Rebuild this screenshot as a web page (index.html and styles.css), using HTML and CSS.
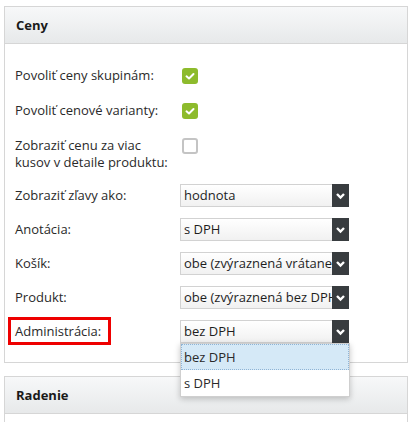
FILE: index.html
```html
<!DOCTYPE html>
<html lang="sk">
<head>
  <meta charset="UTF-8">
  <meta name="viewport" content="width=device-width, initial-scale=1.0">
  <title>Nastavenia – Ceny</title>
  <link rel="stylesheet" href="styles.css">
</head>
<body>
  <div class="page">
    <section class="panel">
      <header class="panel-head">Ceny</header>
      <div class="panel-body">
        <div class="row check-row">
          <label class="label">Povoliť ceny skupinám:</label>
          <span class="checkbox checked"><svg viewBox="0 0 16 16"><polyline points="4.5,8.3 7,10.5 11.5,6" /></svg></span>
        </div>
        <div class="row check-row">
          <label class="label">Povoliť cenové varianty:</label>
          <span class="checkbox checked"><svg viewBox="0 0 16 16"><polyline points="4.5,8.3 7,10.5 11.5,6" /></svg></span>
        </div>
        <div class="row check-row last-check">
          <label class="label">Zobraziť cenu za viac kusov v detaile produktu:</label>
          <span class="checkbox"></span>
        </div>

        <div class="row select-row">
          <label class="label">Zobraziť zľavy ako:</label>
          <div class="select"><span class="value">hodnota</span><span class="arrow"><svg viewBox="0 0 17 24"><polyline points="5,10 8.5,13.5 12,10" /></svg></span></div>
        </div>
        <div class="row select-row">
          <label class="label">Anotácia:</label>
          <div class="select"><span class="value">s DPH</span><span class="arrow"><svg viewBox="0 0 17 24"><polyline points="5,10 8.5,13.5 12,10" /></svg></span></div>
        </div>
        <div class="row select-row">
          <label class="label">Košík:</label>
          <div class="select"><span class="value">obe (zvýraznená vrátane DPH)</span><span class="arrow"><svg viewBox="0 0 17 24"><polyline points="5,10 8.5,13.5 12,10" /></svg></span></div>
        </div>
        <div class="row select-row">
          <label class="label">Produkt:</label>
          <div class="select"><span class="value">obe (zvýraznená bez DPH)</span><span class="arrow"><svg viewBox="0 0 17 24"><polyline points="5,10 8.5,13.5 12,10" /></svg></span></div>
        </div>
        <div class="row select-row last-row">
          <span class="highlight"></span>
          <label class="label">Administrácia:</label>
          <div class="select open">
            <span class="value">bez DPH</span><span class="arrow"><svg viewBox="0 0 17 24"><polyline points="5,10 8.5,13.5 12,10" /></svg></span>
            <ul class="options">
              <li class="active">bez DPH</li>
              <li>s DPH</li>
            </ul>
          </div>
        </div>
      </div>
    </section>

    <section class="panel">
      <header class="panel-head">Radenie</header>
      <div class="panel-body empty"></div>
    </section>
  </div>
</body>
</html>
```

FILE: styles.css
```css
:root {
  --border: #d6d6d6;
  --text: #2a2a2a;
  --green: #8dbb2c;
  --dark: #383c3f;
}

body {
  margin: 0;
  font-family: 'Open Sans', 'DejaVu Sans', sans-serif;
  font-size: 13px;
  color: var(--text);
  background: #ffffff;
}

.page {
  padding: 6px 6px 0 4px;
}

.panel {
  border: 1px solid var(--border);
  background: #ffffff;
  margin-bottom: 13px;
}

.panel-head {
  height: 36px;
  line-height: 36px;
  padding-left: 11px;
  font-weight: bold;
  color: #1a1a1a;
  background: linear-gradient(#f7f8f9, #e7e9ea);
  border-bottom: 1px solid var(--border);
}

.panel-body {
  padding: 23px 10px 19px 10px;
}

.panel-body.empty {
  height: 40px;
  padding: 0;
}

.row {
  display: flex;
  position: relative;
}

.label {
  width: 165px;
  flex-shrink: 0;
  line-height: 17px;
}

.check-row {
  align-items: flex-start;
  margin-bottom: 18px;
}

.check-row .label {
  width: 158px;
  margin-right: 7px;
}

.check-row.last-check {
  margin-bottom: 13px;
}

.checkbox {
  width: 16px;
  height: 16px;
  margin: 1px 0 0 2px;
  box-sizing: border-box;
  border: 2px solid #c4c4c4;
  border-radius: 3px;
  background: #ffffff;
}

.checkbox.checked {
  border: none;
  background: var(--green);
}

.checkbox svg {
  display: block;
  width: 16px;
  height: 16px;
}

.checkbox polyline {
  fill: none;
  stroke: #ffffff;
  stroke-width: 2;
  stroke-linecap: round;
  stroke-linejoin: round;
}

.select-row {
  align-items: center;
  margin-bottom: 11px;
}

.select-row.last-row {
  margin-bottom: 0;
}

.select {
  position: relative;
  display: flex;
  width: 169px;
  height: 23px;
  box-sizing: border-box;
  border: 1px solid #d2d2d2;
  border-right: none;
  background: linear-gradient(#ffffff, #f1f1f1);
}

.select .value {
  flex: 1;
  overflow: hidden;
  white-space: nowrap;
  padding-left: 3px;
  line-height: 21px;
  color: #1e1e1e;
}

.select .arrow {
  width: 17px;
  height: 23px;
  margin-top: -1px;
  background: var(--dark);
}

.arrow svg {
  display: block;
  width: 17px;
  height: 24px;
}

.arrow polyline {
  fill: none;
  stroke: #ffffff;
  stroke-width: 2.4;
}

.options {
  position: absolute;
  top: 22px;
  left: -1px;
  width: 168px;
  margin: 0;
  padding: 0;
  list-style: none;
  background: #ffffff;
  border: 1px solid #cfcfcf;
  box-shadow: 0 2px 6px rgba(0, 0, 0, 0.22);
  z-index: 2;
}

.options li {
  height: 24px;
  line-height: 24px;
  padding-left: 2px;
  border: 1px solid transparent;
}

.options li.active {
  background: #d5e9f7;
  border: 1px dotted #8fb4d6;
}

.highlight {
  position: absolute;
  left: -7px;
  top: -3px;
  width: 97px;
  height: 22px;
  border: 3px solid #ee0000;
}
```
